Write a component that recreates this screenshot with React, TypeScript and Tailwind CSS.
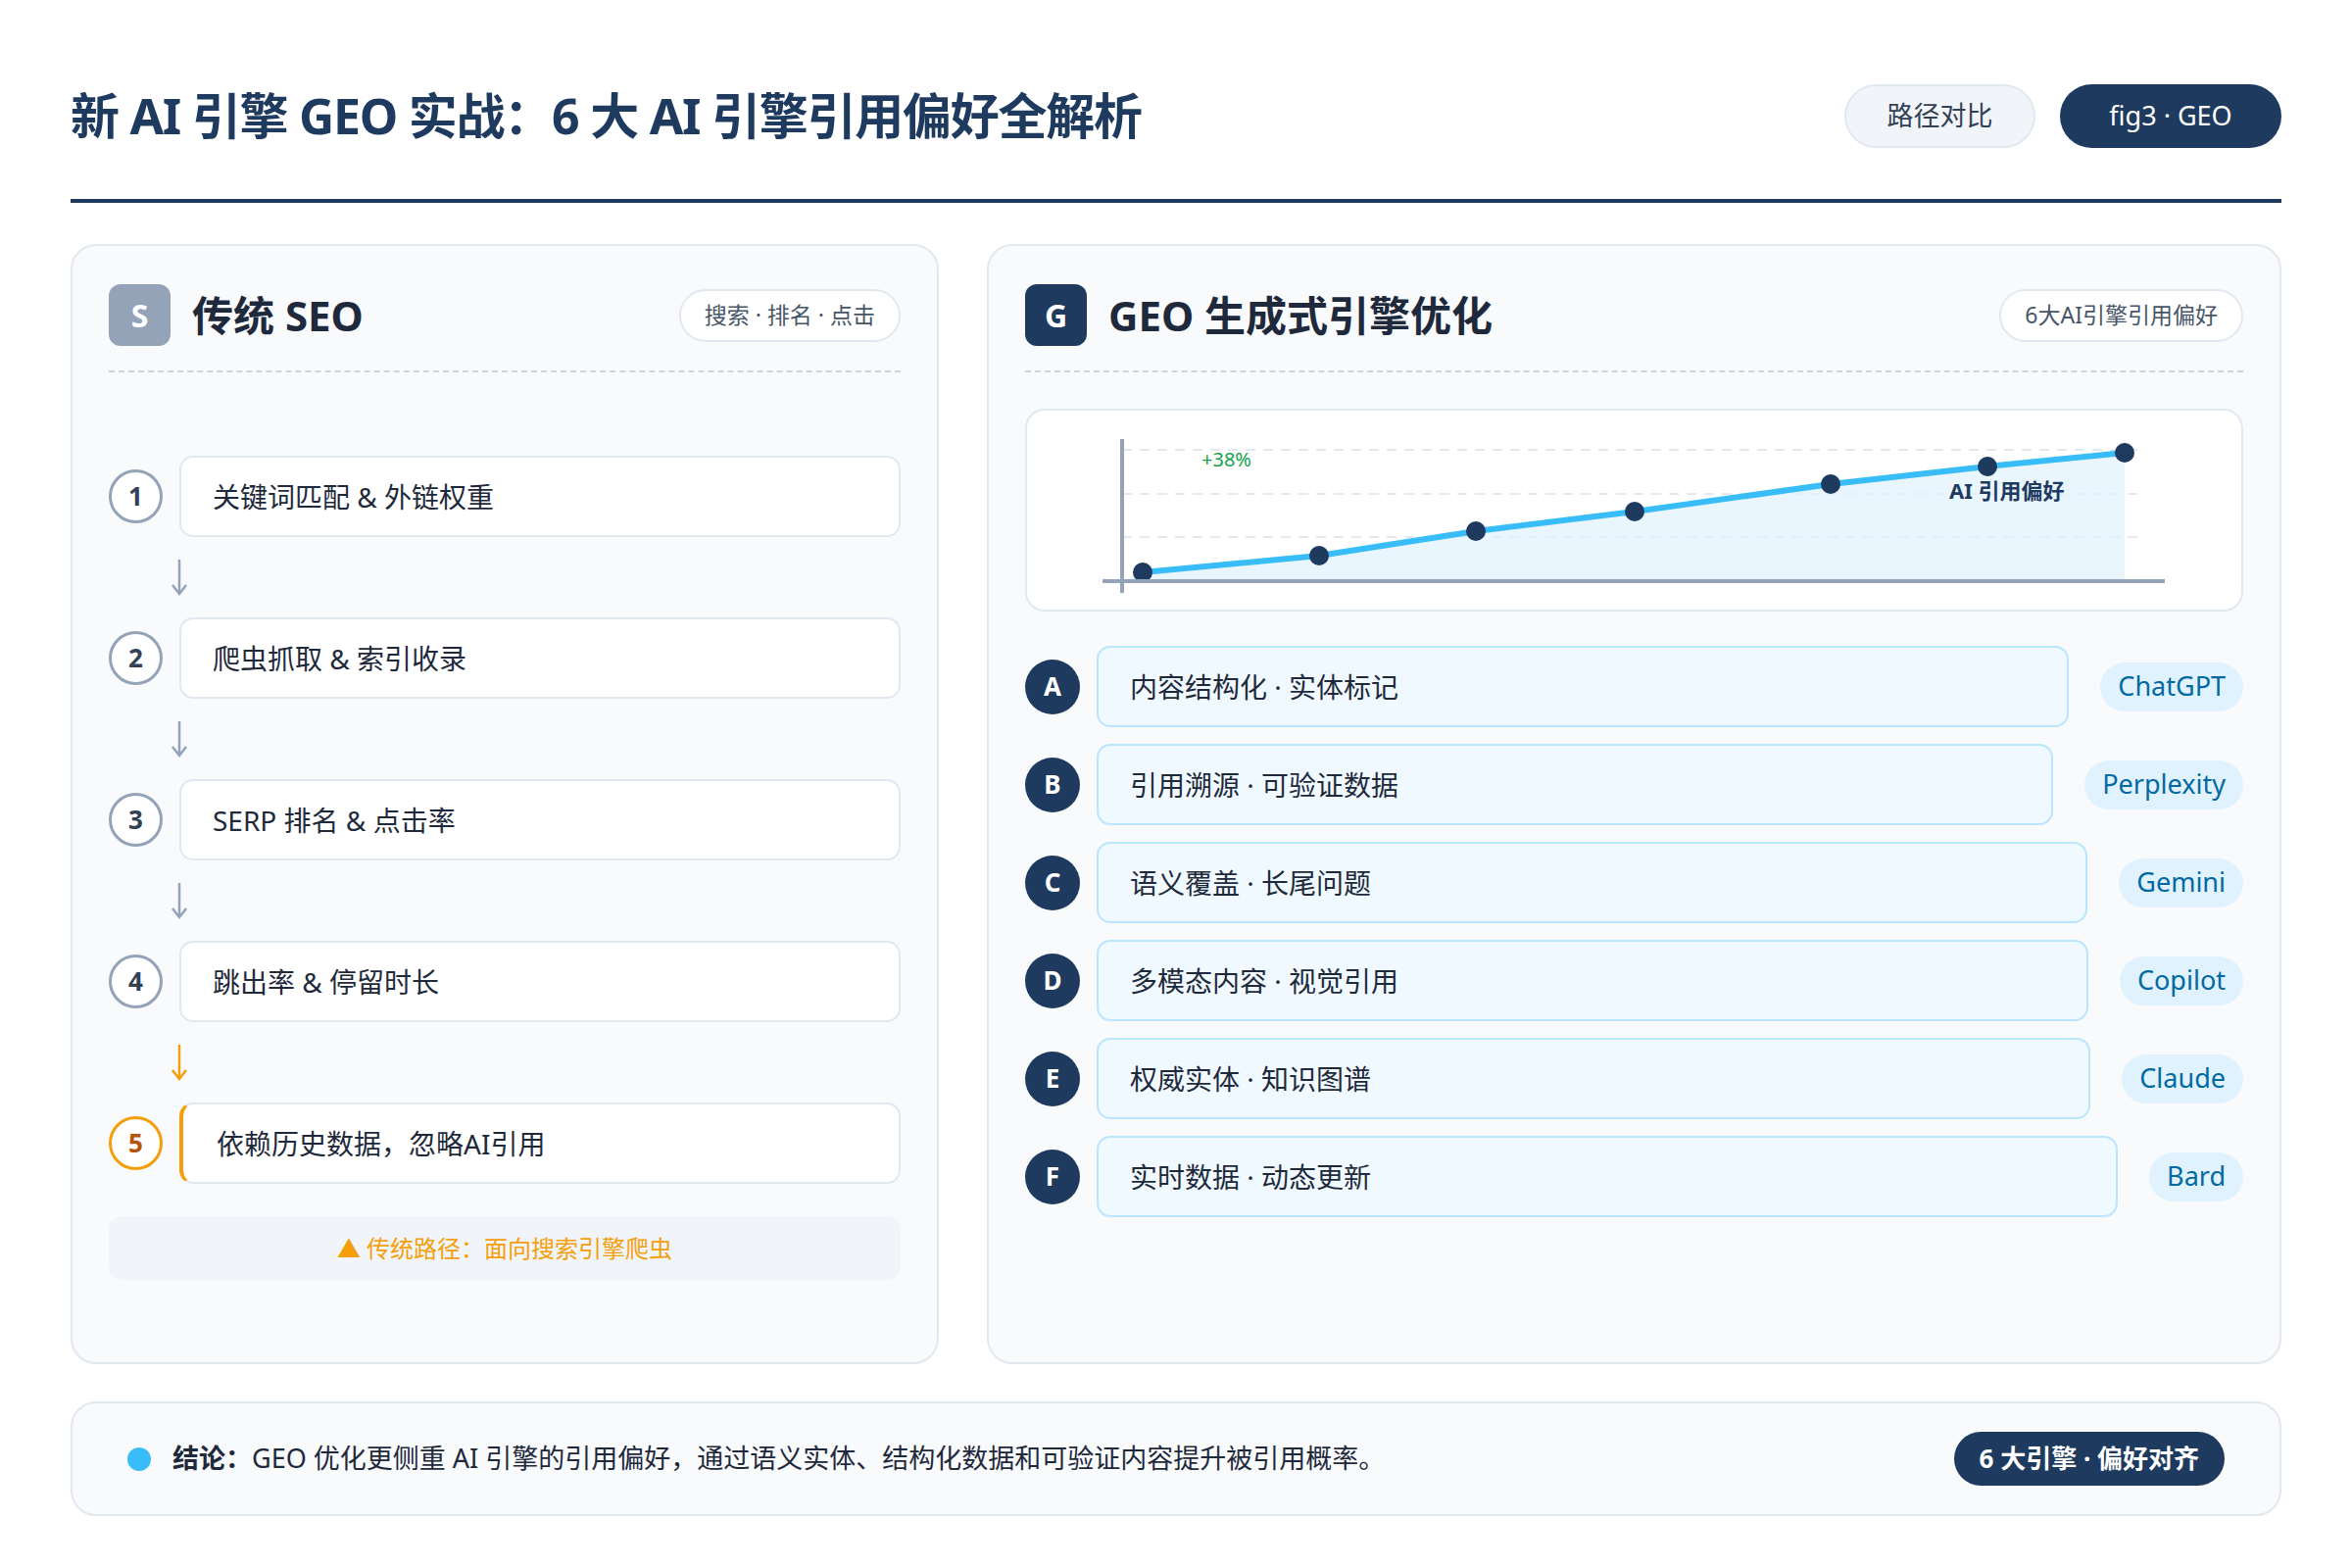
import React from "react";

const steps = [
  { n: "1", t: "关键词匹配 & 外链权重" },
  { n: "2", t: "爬虫抓取 & 索引收录" },
  { n: "3", t: "SERP 排名 & 点击率" },
  { n: "4", t: "跳出率 & 停留时长" },
];

const rows = [
  { l: "A", t: "内容结构化 · 实体标记", tag: "ChatGPT" },
  { l: "B", t: "引用溯源 · 可验证数据", tag: "Perplexity" },
  { l: "C", t: "语义覆盖 · 长尾问题", tag: "Gemini" },
  { l: "D", t: "多模态内容 · 视觉引用", tag: "Copilot" },
  { l: "E", t: "权威实体 · 知识图谱", tag: "Claude" },
  { l: "F", t: "实时数据 · 动态更新", tag: "Bard" },
];

const pts: [number, number][] = [
  [118, 165], [298, 148], [458, 123], [620, 103], [820, 75], [980, 57], [1120, 43],
];

function Arrow({ orange }: { orange?: boolean }) {
  const c = orange ? "#f59e0b" : "#94a3b8";
  return (
    <div className="h-[82px] flex items-center pl-[62px]">
      <svg width="20" height="40" viewBox="0 0 20 40">
        <line x1="10" y1="2" x2="10" y2="36" stroke={c} strokeWidth="2.5" />
        <path d="M3 28 L10 37 L17 28" fill="none" stroke={c} strokeWidth="2.5" />
      </svg>
    </div>
  );
}

export default function App() {
  const line = pts.map((p) => p.join(",")).join(" ");
  const area = `97,174 ${line} 1120,174`;
  return (
    <div
      className="w-[2400px] h-[1600px] bg-white px-[72px] pt-[86px] text-[#1e293b]"
      style={{ fontFamily: '"Noto Sans", "Noto Sans CJK SC", sans-serif' }}
    >
      <div className="flex items-center justify-between h-[65px]">
        <h1 className="text-[50px] font-bold text-[#1e3a5f] tracking-tight">
          新 AI 引擎 GEO 实战：6 大 AI 引擎引用偏好全解析
        </h1>
        <div className="flex gap-[25px]">
          <div className="w-[195px] h-[65px] rounded-full bg-[#f1f5f9] border-2 border-[#e2e8f0] flex items-center justify-center text-[27px] text-[#334155]">
            路径对比
          </div>
          <div className="w-[226px] h-[65px] rounded-full bg-[#1e3a5f] flex items-center justify-center text-[27px] text-white">
            fig3 · GEO
          </div>
        </div>
      </div>
      <div className="mt-[52px] h-[4px] bg-[#1e3a5f]" />

      <div className="mt-[42px] flex gap-[49px] h-[1143px]">
        {/* Left */}
        <div className="w-[902px] rounded-[26px] border-2 border-[#e2e8f0] bg-[#f8fafc] px-[37px] pt-[39px]">
          <div className="flex items-center justify-between h-[63px]">
            <div className="flex items-center gap-[22px]">
              <div className="w-[63px] h-[63px] rounded-[12px] bg-[#94a3b8] text-white text-[32px] font-bold flex items-center justify-center">S</div>
              <span className="text-[42px] font-bold text-[#1e293b]">传统 SEO</span>
            </div>
            <div className="h-[54px] px-[24px] rounded-full bg-white border-2 border-[#e2e8f0] flex items-center text-[23px] text-[#475569]">
              搜索 · 排名 · 点击
            </div>
          </div>
          <div className="mt-[25px] border-t-2 border-dashed border-[#cbd5e1]" />
          <div className="mt-[85px]">
            {steps.map((s) => (
              <div key={s.n}>
                <div className="flex items-center gap-[17px]">
                  <div className="w-[55px] h-[55px] rounded-full border-[3px] border-[#94a3b8] bg-white flex items-center justify-center text-[26px] font-bold text-[#334155]">{s.n}</div>
                  <div className="flex-1 h-[83px] rounded-[14px] bg-white border-2 border-[#e2e8f0] flex items-center px-[32px] text-[28px] text-[#1e293b]">{s.t}</div>
                </div>
                <Arrow orange={s.n === "4"} />
              </div>
            ))}
            <div className="flex items-center gap-[17px]">
              <div className="w-[55px] h-[55px] rounded-full border-[3px] border-[#f59e0b] bg-white flex items-center justify-center text-[26px] font-bold text-[#b45309]">5</div>
              <div className="flex-1 h-[83px] rounded-[14px] bg-white border-2 border-[#e2e8f0] border-l-[4px] border-l-[#f59e0b] flex items-center px-[34px] text-[28px] text-[#1e293b]">依赖历史数据，忽略AI引用</div>
            </div>
            <div className="mt-[33px] h-[65px] rounded-[14px] bg-[#f1f5f9] flex items-center justify-center text-[24px] text-[#f59e0b]">
              ▲ 传统路径：面向搜索引擎爬虫
            </div>
          </div>
        </div>

        {/* Right */}
        <div className="flex-1 rounded-[26px] border-2 border-[#e2e8f0] bg-[#f8fafc] px-[37px] pt-[39px]">
          <div className="flex items-center justify-between h-[63px]">
            <div className="flex items-center gap-[22px]">
              <div className="w-[63px] h-[63px] rounded-[12px] bg-[#1e3a5f] text-white text-[32px] font-bold flex items-center justify-center">G</div>
              <span className="text-[42px] font-bold text-[#1e293b]">GEO 生成式引擎优化</span>
            </div>
            <div className="h-[54px] px-[24px] rounded-full bg-white border-2 border-[#e2e8f0] flex items-center text-[23px] text-[#475569]">
              6大AI引擎引用偏好
            </div>
          </div>
          <div className="mt-[25px] border-t-2 border-dashed border-[#cbd5e1]" />
          <div className="mt-[37px] h-[207px] rounded-[20px] bg-white border-2 border-[#e2e8f0] overflow-hidden">
            <svg width="1239" height="207" viewBox="0 0 1239 207">
              {[40, 85, 129].map((y) => (
                <line key={y} x1="97" y1={y} x2="1141" y2={y} stroke="#e2e8f0" strokeWidth="2" strokeDasharray="10 8" />
              ))}
              <polygon points={area} fill="#e0f2fe" opacity="0.7" />
              <polyline points={line} fill="none" stroke="#38bdf8" strokeWidth="6" strokeLinejoin="round" />
              {pts.map(([x, y]) => (
                <circle key={x} cx={x} cy={y} r="10" fill="#1e3a5f" />
              ))}
              <line x1="97" y1="29" x2="97" y2="186" stroke="#94a3b8" strokeWidth="4" />
              <line x1="77" y1="174" x2="1161" y2="174" stroke="#94a3b8" strokeWidth="4" />
              <text x="178" y="57" fill="#16a34a" fontSize="20" fontFamily="Noto Sans, sans-serif">+38%</text>
              <text x="941" y="90" fill="#1e3a5f" fontSize="22" fontWeight="700" fontFamily="Noto Sans, Noto Sans CJK SC, sans-serif">AI 引用偏好</text>
            </svg>
          </div>
          <div className="mt-[35px] flex flex-col gap-[17px]">
            {rows.map((r) => (
              <div key={r.l} className="flex items-center h-[83px]">
                <div className="w-[56px] h-[56px] rounded-full bg-[#1e3a5f] text-white text-[26px] font-bold flex items-center justify-center">{r.l}</div>
                <div className="flex-1 ml-[17px] h-[83px] rounded-[14px] bg-[#f0f9ff] border-2 border-[#bae6fd] flex items-center px-[32px] text-[28px] text-[#1e293b]">{r.t}</div>
                <div className="ml-[32px] h-[50px] px-[18px] rounded-full bg-[#e0f2fe] text-[#0369a1] text-[27px] flex items-center">{r.tag}</div>
              </div>
            ))}
          </div>
        </div>
      </div>

      <div className="mt-[38px] h-[117px] rounded-[26px] border-2 border-[#e2e8f0] bg-[#f8fafc] flex items-center justify-between pl-[56px] pr-[56px]">
        <div className="flex items-center gap-[22px] text-[27px] text-[#1e293b]">
          <span className="w-[24px] h-[24px] rounded-full bg-[#38bdf8]" />
          <span><b className="font-bold">结论：</b>GEO 优化更侧重 AI 引擎的引用偏好，通过语义实体、结构化数据和可验证内容提升被引用概率。</span>
        </div>
        <div className="h-[55px] px-[26px] rounded-full bg-[#1e3a5f] text-white text-[26px] font-bold flex items-center">6 大引擎 · 偏好对齐</div>
      </div>
    </div>
  );
}
